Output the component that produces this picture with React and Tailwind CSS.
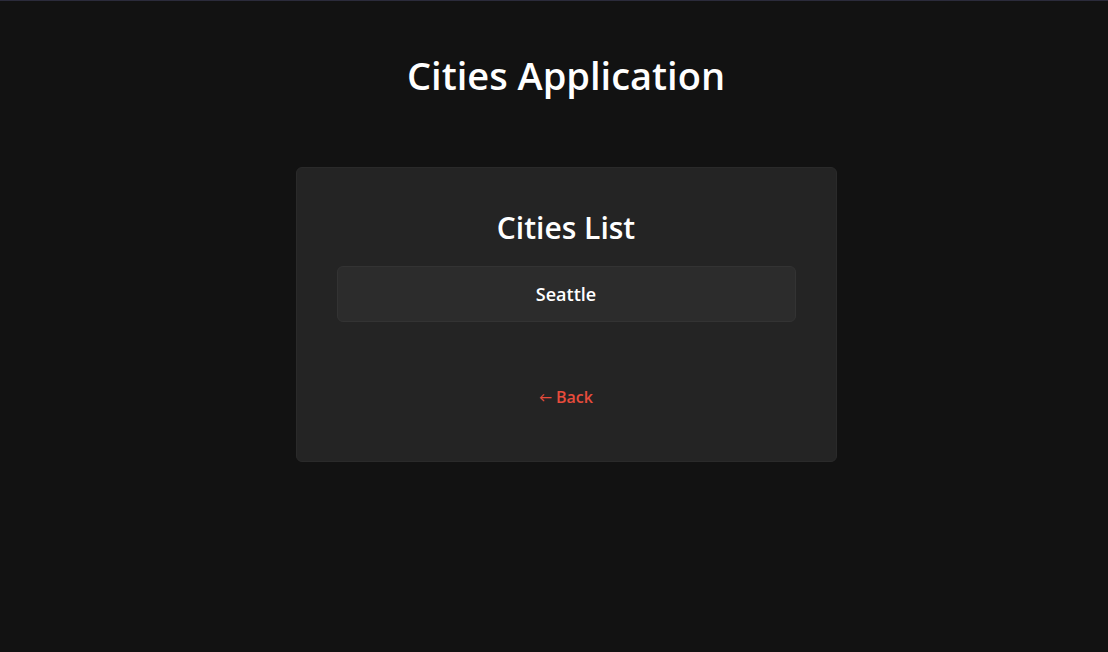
import React from 'react';

const cities = ['Seattle'];

export default function App() {
  return (
    <div
      className="min-h-[652px] bg-[#121212] border-t border-[#2b2b3b] text-white flex flex-col items-center pl-6"
      style={{ fontFamily: '"Open Sans", Lato, sans-serif' }}
    >
      <h1 className="mt-[48px] text-[38px] leading-[52px] font-semibold">Cities Application</h1>

      <div className="mt-[66px] w-[541px] bg-[#242424] border border-[#2a2a2a] rounded-md px-10 pt-[38px] pb-[53px] flex flex-col items-center">
        <h2 className="text-[30px] leading-[44px] font-semibold">Cities List</h2>
        <ul className="mt-[16px] w-full">
          {cities.map(city => (
            <li
              key={city}
              className="h-[56px] flex items-center justify-center bg-[#2c2c2c] border border-[#333333] rounded-md text-[18px] font-semibold"
            >
              {city}
            </li>
          ))}
        </ul>
        <a href="#" className="mt-[64px] text-[16px] leading-[22px] font-semibold text-[#e74c3c] flex items-center gap-1">
          <span className="text-[13px]">←</span>
          <span>Back</span>
        </a>
      </div>
    </div>
  );
}
